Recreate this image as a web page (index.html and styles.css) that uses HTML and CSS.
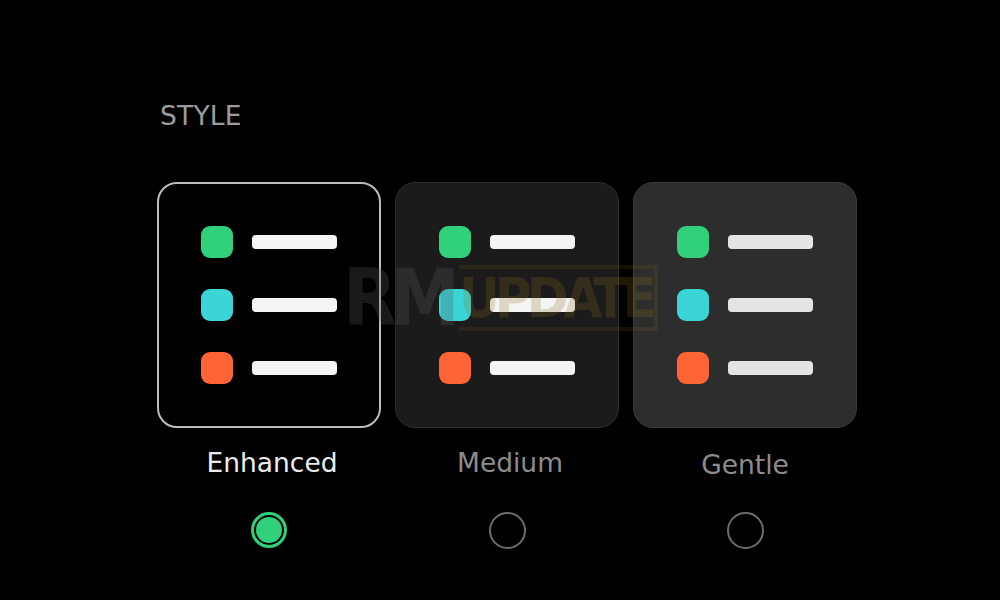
FILE: index.html
```html
<!DOCTYPE html>
<html lang="en">
<head>
<meta charset="utf-8">
<title>Style</title>
<link rel="stylesheet" href="styles.css">
</head>
<body>
<main class="page">
  <h2 class="heading">STYLE</h2>
  <div class="options">
    <div class="option">
      <div class="card card-enhanced">
        <div class="row"><span class="dot green"></span><span class="bar"></span></div>
        <div class="row"><span class="dot cyan"></span><span class="bar"></span></div>
        <div class="row"><span class="dot orange"></span><span class="bar"></span></div>
      </div>
      <div class="label label-active label-nudge">Enhanced</div>
      <div class="radio radio-on"><span class="radio-dot"></span></div>
    </div>
    <div class="option">
      <div class="card card-medium">
        <div class="row"><span class="dot green"></span><span class="bar"></span></div>
        <div class="row"><span class="dot cyan"></span><span class="bar"></span></div>
        <div class="row"><span class="dot orange"></span><span class="bar"></span></div>
      </div>
      <div class="label label-nudge">Medium</div>
      <div class="radio"></div>
    </div>
    <div class="option">
      <div class="card card-gentle">
        <div class="row"><span class="dot green"></span><span class="bar bar-soft"></span></div>
        <div class="row"><span class="dot cyan"></span><span class="bar bar-soft"></span></div>
        <div class="row"><span class="dot orange"></span><span class="bar bar-soft"></span></div>
      </div>
      <div class="label label-low">Gentle</div>
      <div class="radio"></div>
    </div>
  </div>
  <div class="watermark"><span class="wm-rm">RM</span><span class="wm-update">UPDATE</span></div>
</main>
</body>
</html>
```
FILE: styles.css
```css
* { box-sizing: border-box; }
html, body {
  margin: 0;
  padding: 0;
  background: #000;
  width: 1000px;
  height: 600px;
  overflow: hidden;
}
.page {
  position: relative;
  padding: 100px 0 0 157px;
  font-family: "DejaVu Sans", sans-serif;
  height: 600px;
}
.heading {
  margin: 0 0 50px 3px;
  font-size: 26.5px;
  line-height: 32px;
  font-weight: normal;
  color: #9c9c9c;
  letter-spacing: 0.2px;
}
.options {
  display: flex;
  gap: 14px;
}
.option {
  width: 224px;
  display: flex;
  flex-direction: column;
  align-items: center;
}
.card {
  width: 224px;
  height: 246px;
  border-radius: 20px;
  display: flex;
  flex-direction: column;
  justify-content: center;
  align-items: center;
  gap: 31px;
}
.card-enhanced {
  background: #000;
  border: 2px solid #bdbdbd;
}
.card-medium {
  background: #1b1b1b;
  border: 1px solid #2c2c2c;
}
.card-gentle {
  background: #2d2d2d;
  border: 1px solid #3c3c3c;
}
.row {
  display: flex;
  align-items: center;
  gap: 19px;
}
.dot {
  width: 32px;
  height: 32px;
  border-radius: 9px;
}
.green { background: #31d07a; }
.cyan { background: #3bd5d8; }
.orange { background: #ff6434; }
.bar {
  width: 85px;
  height: 14px;
  border-radius: 4px;
  background: #f4f4f4;
}
.bar-soft { background: #e4e4e4; }
.label {
  margin-top: 19px;
  font-size: 26.5px;
  line-height: 32px;
  color: #8c8c8c;
}
.label-active { color: #ececec; }
.label-nudge { margin-left: 6px; }
.label-low { margin-top: 21px; margin-bottom: -2px; }
.radio {
  margin-top: 33px;
  width: 37px;
  height: 37px;
  border-radius: 50%;
  border: 2.5px solid #6c6c6c;
  display: flex;
  align-items: center;
  justify-content: center;
}
.radio-on {
  width: 36px;
  height: 36px;
  border: 3px solid #31d07a;
}
.radio-dot {
  width: 26px;
  height: 26px;
  border-radius: 50%;
  background: #31d07a;
}
.watermark {
  position: absolute;
  left: 343px;
  top: 260px;
  display: flex;
  align-items: center;
  font-family: "DejaVu Sans Condensed", "DejaVu Sans", sans-serif;
  font-weight: bold;
  line-height: 76px;
  pointer-events: none;
}
.wm-rm {
  font-size: 78px;
  color: rgba(90, 90, 90, 0.28);
  letter-spacing: -7px;
}
.wm-update {
  margin-left: 6px;
  color: rgba(140, 110, 30, 0.22);
  font-size: 56px;
  line-height: 58px;
  border: 4px solid rgba(140, 110, 30, 0.15);
  border-left: none;
  padding: 0 2px 0 0;
  letter-spacing: -5px;
}
```
